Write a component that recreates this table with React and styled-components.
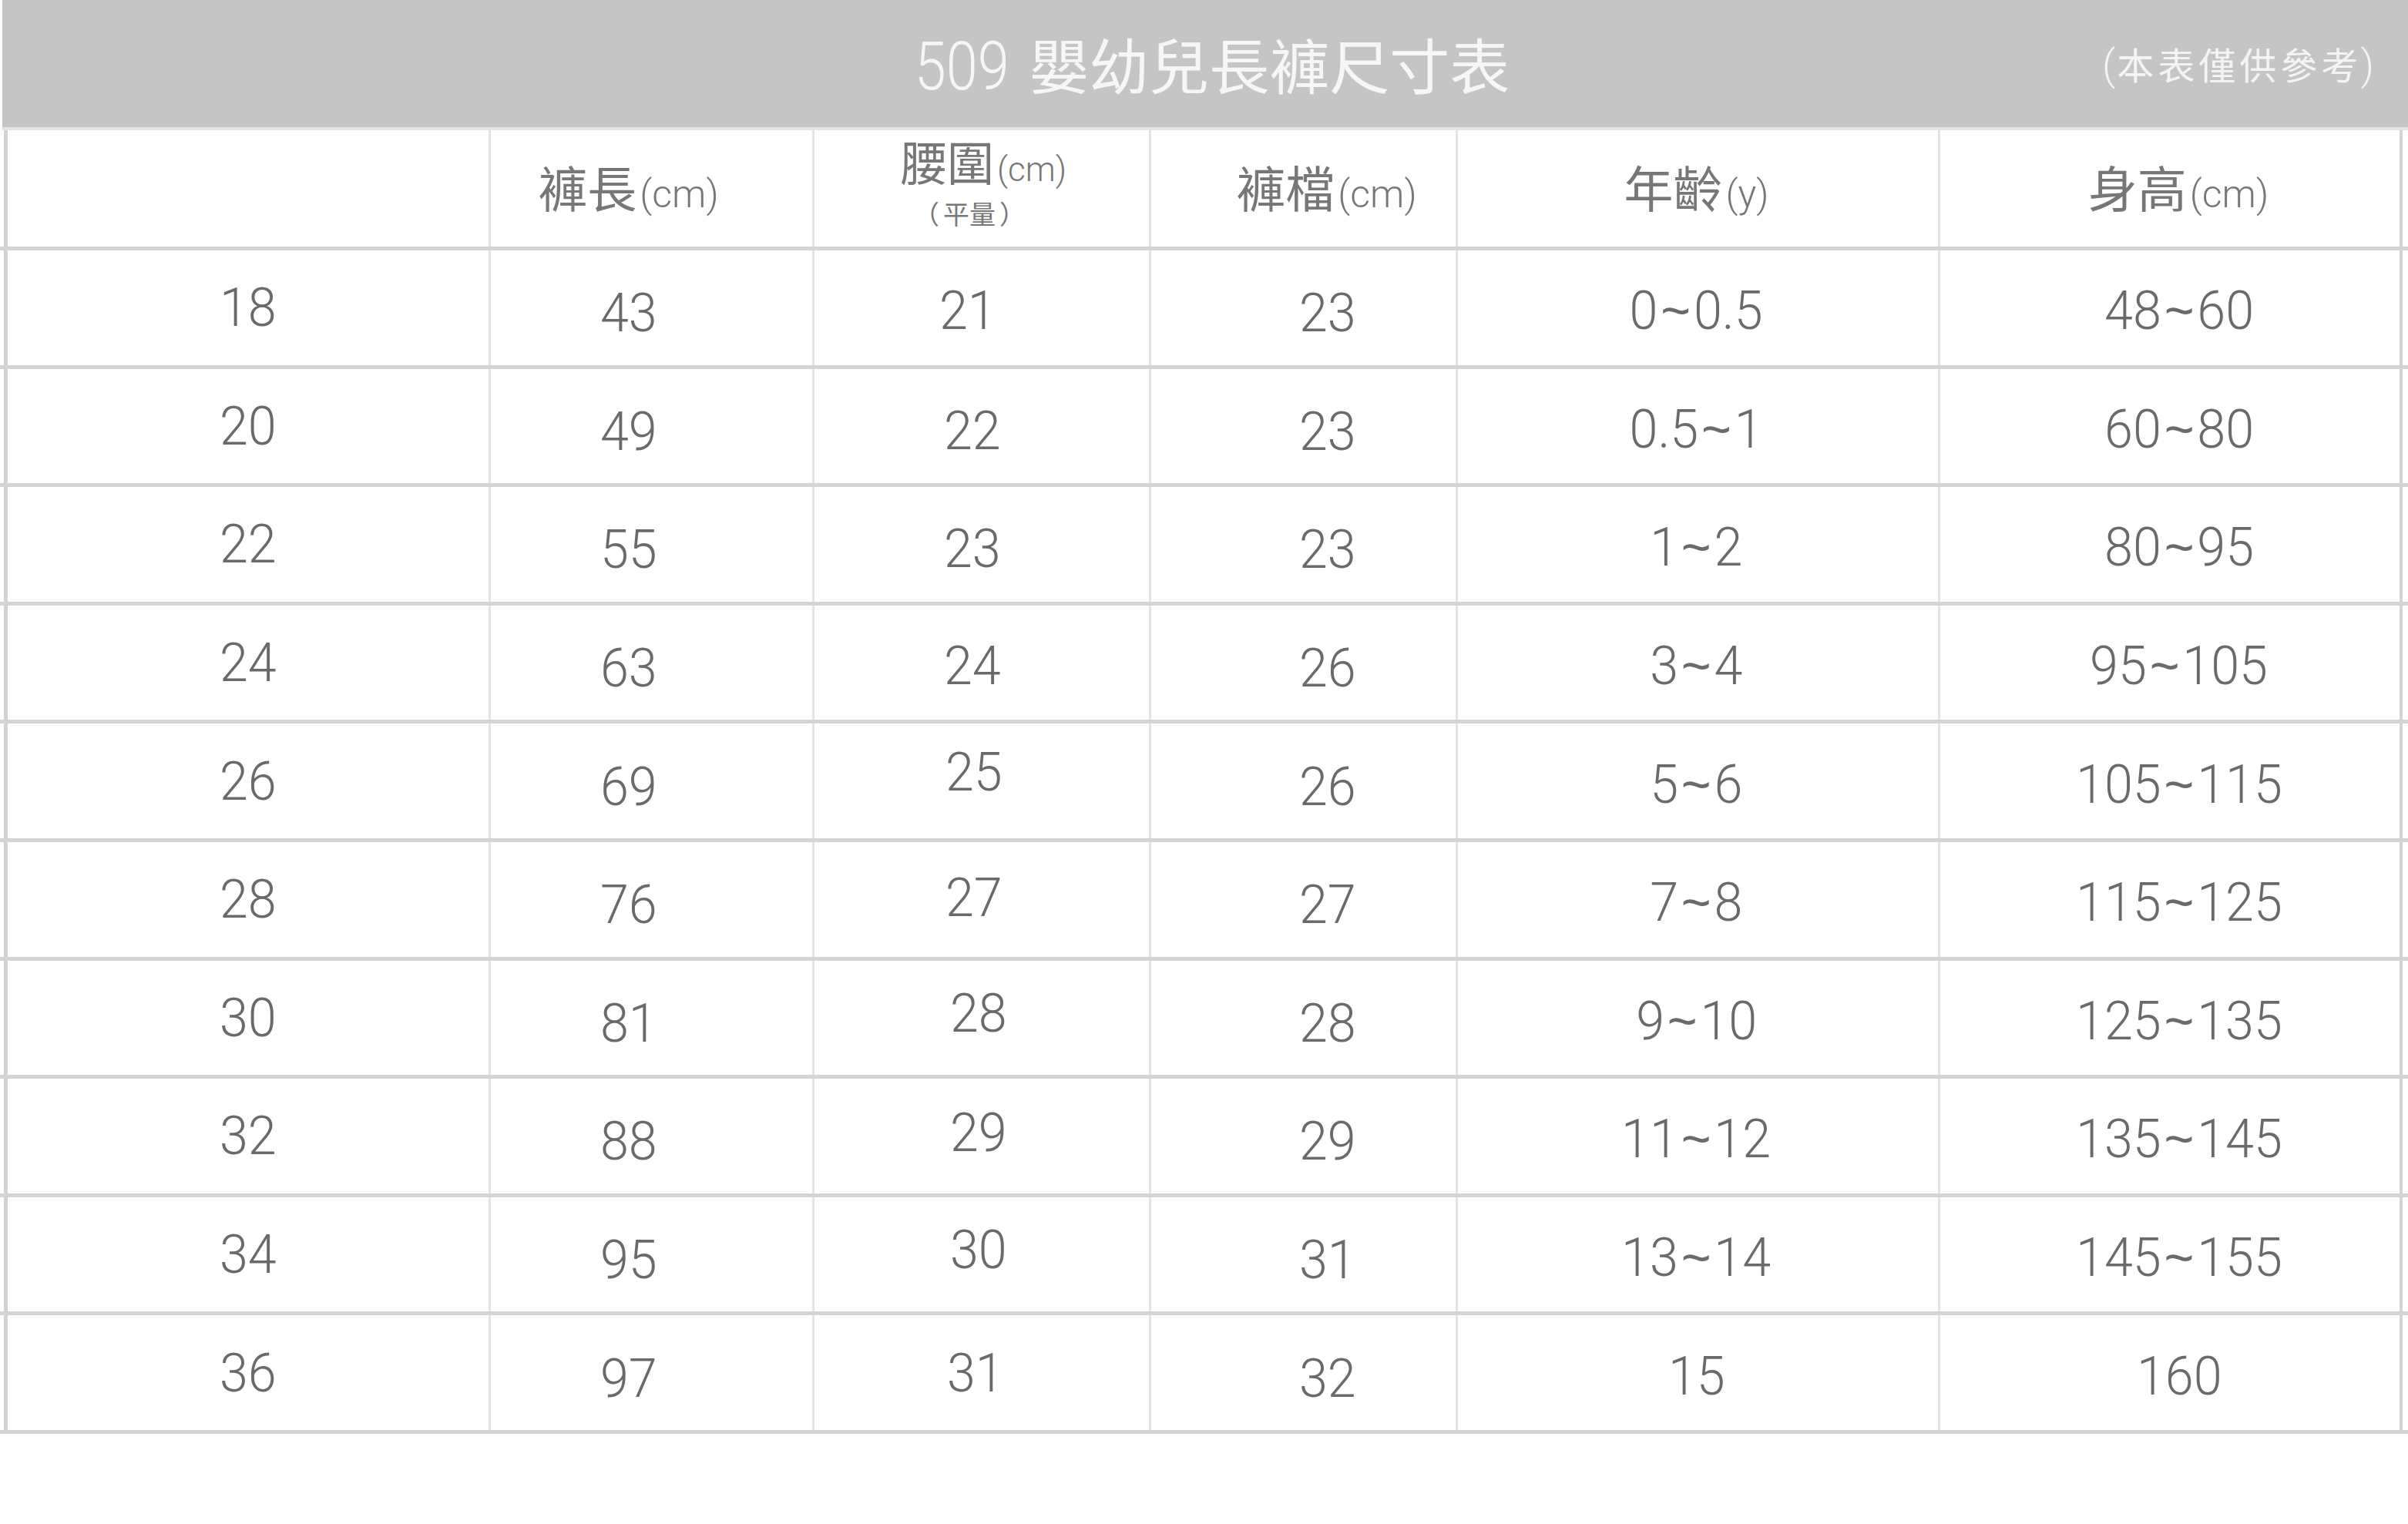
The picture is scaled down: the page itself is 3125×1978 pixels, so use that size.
import React from "react";
import styled, { createGlobalStyle } from "styled-components";

const Global = createGlobalStyle`
  html, body { margin: 0; padding: 0; background: #ffffff; }
  body { font-family: "Roboto", "Noto Sans CJK TC", sans-serif; }
`;

const TRACKS = [629, 420, 437, 398, 626, 603];
const COL_DX = [0, -30, -8, 31, -2, 12];
const COL_DY = [0, 7, 0, 7, 4, 4];
const COL3 = [
  [-18, 4], [-12, 6], [-12, 6], [-12, 4], [-10, -12],
  [-10, -2], [-4, -6], [-4, -4], [-4, -6], [-8, 0],
];

const ROWS = [
  ["18", "43", "21", "23", "0~0.5", "48~60"],
  ["20", "49", "22", "23", "0.5~1", "60~80"],
  ["22", "55", "23", "23", "1~2", "80~95"],
  ["24", "63", "24", "26", "3~4", "95~105"],
  ["26", "69", "25", "26", "5~6", "105~115"],
  ["28", "76", "27", "27", "7~8", "115~125"],
  ["30", "81", "28", "28", "9~10", "125~135"],
  ["32", "88", "29", "29", "11~12", "135~145"],
  ["34", "95", "30", "31", "13~14", "145~155"],
  ["36", "97", "31", "32", "15", "160"],
];

const Page = styled.div`
  width: 3125px;
  height: 1978px;
  background: #fff;
  overflow: hidden;
`;

const TitleBar = styled.header`
  margin-left: 3px;
  height: 165px;
  background: #c5c5c5;
  display: grid;
  grid-template-columns: 1fr auto 1fr;
  align-items: center;
  border-bottom: 4px solid #e4e4e4;
`;

const Title = styled.h1`
  grid-column: 2;
  margin: 6px 0 0 14px;
  display: flex;
  align-items: baseline;
  white-space: nowrap;
  color: #f6f6f6;
  font-weight: 300;
  line-height: 1;
`;

const TitleNum = styled.span`
  font-family: "Roboto", sans-serif;
  font-weight: 300;
  font-size: 88px;
  display: inline-block;
  transform: scaleX(0.84);
  margin: 0 -8px 0 -8px;
`;

const TitleCjk = styled.span`
  font-family: "Noto Sans CJK TC", sans-serif;
  font-weight: 400;
  font-size: 78px;
  margin-left: 22px;
`;

const Note = styled.div`
  grid-column: 3;
  justify-self: end;
  margin: 4px 44px 0 0;
  color: #f4f4f4;
  white-space: nowrap;
  display: flex;
  align-items: baseline;
  line-height: 1;
`;

const NoteParen = styled.span`
  font-family: "Roboto", sans-serif;
  font-weight: 300;
  font-size: 54px;
`;

const NoteCjk = styled.span`
  font-family: "Noto Sans CJK TC", sans-serif;
  font-weight: 400;
  font-size: 48px;
  letter-spacing: 5px;
  margin: 0 -2px 0 2px;
`;

const Table = styled.div`
  display: flex;
  flex-direction: column;
`;

const Row = styled.div`
  display: grid;
  grid-template-columns: ${TRACKS.map((t) => t + "px").join(" ")} 1fr;
  height: ${(p) => p.$h}px;
  padding-left: 5px;
  border-bottom: 5px solid #d4d4d4;
`;

const Cell = styled.div`
  display: flex;
  align-items: center;
  justify-content: center;
  border-left: ${(p) => (p.$first ? "5px solid #d2d2d2" : "3px solid #e3e3e3")};
  border-right: ${(p) => (p.$last ? "4px solid #d4d4d4" : "none")};
`;

const Value = styled.span`
  display: inline-block;
  font-family: "Roboto", sans-serif;
  font-weight: 300;
  font-size: 70px;
  line-height: 1;
  color: #6a6a6a;
  white-space: nowrap;
  transform: translate(${(p) => p.$dx}px, ${(p) => p.$dy}px) scaleX(0.95);
`;

const Tilde = styled.span`
  font-family: "Liberation Sans", sans-serif;
  font-weight: 400;
  margin: 0 4px;
`;

const HeadLabel = styled.div`
  display: flex;
  flex-direction: column;
  align-items: center;
  color: #777777;
  transform: translate(${(p) => p.$dx}px, ${(p) => p.$dy}px);
`;

const HeadLine = styled.div`
  display: flex;
  align-items: baseline;
  white-space: nowrap;
  line-height: 1;
`;

const HeadCjk = styled.span`
  font-family: "Noto Sans CJK TC", sans-serif;
  font-weight: 400;
  font-size: ${(p) => p.$size}px;
`;

const Unit = styled.span`
  font-family: "Roboto", sans-serif;
  font-weight: 300;
  font-size: ${(p) => p.$size}px;
  display: inline-block;
  margin-left: 4px;
`;

const SubNote = styled.span`
  font-family: "Noto Sans CJK TC", sans-serif;
  font-weight: 400;
  font-size: 34px;
  line-height: 1;
  margin-top: 18px;
  margin-left: -36px;
  white-space: nowrap;
`;

const SubBracket = styled.span`
  margin: 0 5px;
`;

const HEADERS = [
  null,
  { cjk: "褲長", unit: "(cm)", size: 64, unitSize: 50, dx: -30, dy: -2 },
  { cjk: "腰圍", unit: "(cm)", size: 61, unitSize: 44, dx: 2, dy: -9, note: "平量" },
  { cjk: "褲檔", unit: "(cm)", size: 64, unitSize: 50, dx: 30, dy: -2 },
  { cjk: "年齡", unit: "(y)", size: 64, unitSize: 50, dx: -2, dy: -2 },
  { cjk: "身高", unit: "(cm)", size: 64, unitSize: 50, dx: 11, dy: -2 },
];

function renderValue(v) {
  const parts = v.split("~");
  if (parts.length === 1) return v;
  return (
    <>
      {parts[0]}
      <Tilde>~</Tilde>
      {parts[1]}
    </>
  );
}

export default function App() {
  return (
    <>
      <Global />
      <Page>
        <TitleBar>
          <Title>
            <TitleNum>509</TitleNum>
            <TitleCjk>嬰幼兒長褲尺寸表</TitleCjk>
          </Title>
          <Note>
            <NoteParen>(</NoteParen>
            <NoteCjk>本表僅供參考</NoteCjk>
            <NoteParen>)</NoteParen>
          </Note>
        </TitleBar>
        <Table>
          <Row $h={151}>
            {HEADERS.map((h, i) => (
              <Cell key={i} $first={i === 0} $last={i === HEADERS.length - 1}>
                {h && (
                  <HeadLabel $dx={h.dx} $dy={h.dy}>
                    <HeadLine>
                      <HeadCjk $size={h.size}>{h.cjk}</HeadCjk>
                      <Unit $size={h.unitSize}>{h.unit}</Unit>
                    </HeadLine>
                    {h.note && (
                      <SubNote>
                        <SubBracket>（</SubBracket>
                        {h.note}
                        <SubBracket>）</SubBracket>
                      </SubNote>
                    )}
                  </HeadLabel>
                )}
              </Cell>
            ))}
          </Row>
          {ROWS.map((r, ri) => (
            <Row key={ri} $h={148.6}>
              {r.map((v, ci) => {
                const dx = ci === 2 ? COL3[ri][0] : COL_DX[ci];
                const dy = ci === 2 ? COL3[ri][1] : COL_DY[ci];
                return (
                  <Cell key={ci} $first={ci === 0} $last={ci === r.length - 1}>
                    <Value $dx={dx} $dy={dy}>{renderValue(v)}</Value>
                  </Cell>
                );
              })}
            </Row>
          ))}
        </Table>
      </Page>
    </>
  );
}
